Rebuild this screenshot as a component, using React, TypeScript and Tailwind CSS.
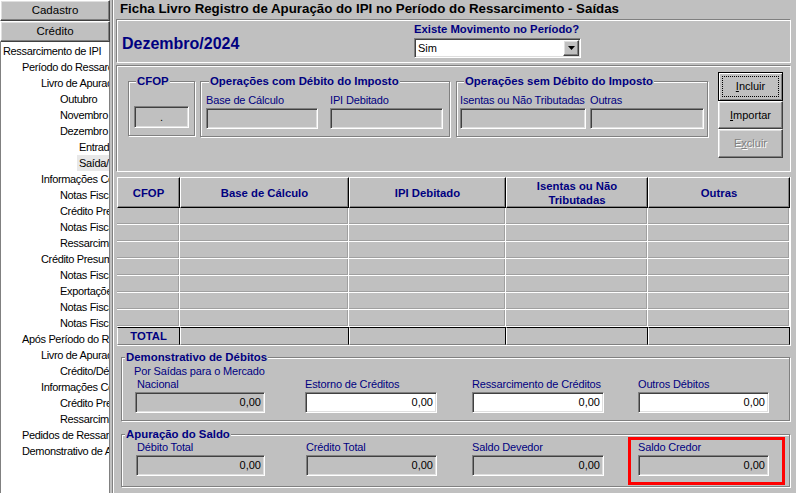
import React from "react";

type TreeItem = { label: string; level: number; selected?: boolean };

const TREE: TreeItem[] = [
  { label: "Ressarcimento de IPI", level: 0 },
  { label: "Período do Ressarcimento", level: 1 },
  { label: "Livro de Apuração", level: 2 },
  { label: "Outubro", level: 3 },
  { label: "Novembro", level: 3 },
  { label: "Dezembro", level: 3 },
  { label: "Entradas", level: 4 },
  { label: "Saída/Débito", level: 4, selected: true },
  { label: "Informações Complementares", level: 2 },
  { label: "Notas Fiscais", level: 3 },
  { label: "Crédito Presumido", level: 3 },
  { label: "Notas Fiscais", level: 3 },
  { label: "Ressarcimento", level: 3 },
  { label: "Crédito Presumido", level: 2 },
  { label: "Notas Fiscais", level: 3 },
  { label: "Exportações", level: 3 },
  { label: "Notas Fiscais", level: 3 },
  { label: "Notas Fiscais", level: 3 },
  { label: "Após Período do Ressarcimento", level: 1 },
  { label: "Livro de Apuração", level: 2 },
  { label: "Crédito/Débito", level: 3 },
  { label: "Informações Complementares", level: 2 },
  { label: "Crédito Presumido", level: 3 },
  { label: "Ressarcimento", level: 3 },
  { label: "Pedidos de Ressarcimento", level: 1 },
  { label: "Demonstrativo de Apuração", level: 1 },
];

const INDENT = ["pl-0", "pl-[19px]", "pl-[38px]", "pl-[57px]", "pl-[76px]"];

const SUNKEN =
  "border border-t-[#808080] border-l-[#808080] border-b-white border-r-white shadow-[inset_1px_1px_0_#404040,inset_-1px_-1px_0_#dfdfdf]";
const PANEL =
  "border border-t-[#808080] border-l-[#808080] border-b-white border-r-white shadow-[inset_1px_1px_0_#fff]";
const RAISED =
  "border border-t-white border-l-white border-b-[#404040] border-r-[#404040] shadow-[inset_-1px_-1px_0_#808080,inset_1px_1px_0_#dfdfdf]";
const GROUP = "border border-[#808080] shadow-[inset_1px_1px_0_#fff,1px_1px_0_#fff]";

function SideButton({ children }: { children: React.ReactNode }) {
  return (
    <div className={`h-[21px] w-full flex items-center justify-center text-[11.5px] text-black bg-[#c0c0c0] ${RAISED}`}>
      {children}
    </div>
  );
}

function Sidebar() {
  return (
    <div className="w-[110px] shrink-0 flex flex-col">
      <SideButton>Cadastro</SideButton>
      <SideButton>Crédito</SideButton>
      <div className="flex-1 bg-white border-l border-r border-[#808080] pt-[1px] text-[11px] tracking-[-0.35px] text-black overflow-hidden">
        {TREE.map((t, i) => (
          <div key={i} className={`h-[16px] leading-[16px] whitespace-nowrap overflow-hidden ${INDENT[t.level]}`}>
            <span className={`inline-block h-[16px] px-[2px] ${t.selected ? "bg-[#e8e8e8]" : ""}`}>{t.label}</span>
          </div>
        ))}
      </div>
    </div>
  );
}

function Field({ value, white, className }: { value?: string; white?: boolean; className: string }) {
  return (
    <div
      className={`${SUNKEN} ${white ? "bg-white" : "bg-[#c0c0c0]"} ${className} flex items-center justify-end pr-[3px] text-[11px] text-black`}
    >
      {value}
    </div>
  );
}

function Legend({ children, className }: { children: React.ReactNode; className: string }) {
  return (
    <legend className={`${className} px-[1px] bg-[#c0c0c0] text-[11.4px] font-bold leading-[14px] text-[#000080]`}>
      {children}
    </legend>
  );
}

function Label({ children, className = "" }: { children: React.ReactNode; className?: string }) {
  return (
    <div className={`h-[13px] leading-[13px] text-[11px] tracking-[-0.15px] text-[#000080] whitespace-nowrap ${className}`}>
      {children}
    </div>
  );
}

function TopPanel() {
  return (
    <div className={`h-[44px] flex ${PANEL}`}>
      <div className="w-[297px] pl-[5px] pt-[14px] text-[16px] leading-[19px] font-bold text-[#000080]">Dezembro/2024</div>
      <div className="flex flex-col pt-[2px]">
        <div className="h-[14px] leading-[14px] text-[11.3px] font-bold text-[#000080]">Existe Movimento no Período?</div>
        <div className={`mt-[2px] h-[20px] w-[167px] bg-white flex items-center justify-between pl-[3px] pr-[1px] ${SUNKEN}`}>
          <span className="text-[11px] text-black">Sim</span>
          <div className={`w-[16px] h-[16px] bg-[#c0c0c0] flex items-center justify-center ${RAISED}`}>
            <svg width="7" height="4" viewBox="0 0 7 4">
              <path d="M0 0h7L3.5 4z" fill="#000" />
            </svg>
          </div>
        </div>
      </div>
    </div>
  );
}

function ActionButtons() {
  return (
    <div className="ml-[10px] w-[65px] flex flex-col text-[11px]">
      <div className="h-[29px] border border-black shadow-[inset_1px_1px_0_#fff,inset_-1px_-1px_0_#808080] p-[3px] flex">
        <div className="flex-1 border border-dotted border-black flex items-center justify-center text-black">
          <span>
            <span className="underline">I</span>ncluir
          </span>
        </div>
      </div>
      <div className={`h-[28px] flex items-center justify-center text-black bg-[#c0c0c0] ${RAISED}`}>
        <span>
          <span className="underline">I</span>mportar
        </span>
      </div>
      <div className={`h-[29px] flex items-center justify-center text-[#808080] [text-shadow:1px_1px_0_#fff] ${RAISED}`}>
        <span>
          E<span className="underline">x</span>cluir
        </span>
      </div>
    </div>
  );
}

function EditPanel() {
  return (
    <div className={`mt-[2px] h-[107px] flex items-start pl-[11px] pt-[6px] ${PANEL}`}>
      <fieldset className={`mt-[2px] w-[67px] pb-[7px] ${GROUP}`}>
        <Legend className="ml-[7px]">CFOP</Legend>
        <div className={`mt-[18px] ml-[5px] w-[55px] h-[22px] bg-[#c0c0c0] flex items-center justify-center text-[11px] text-black ${SUNKEN}`}>
          .
        </div>
      </fieldset>
      <fieldset className={`mt-[2px] ml-[5px] w-[250px] pb-[7px] ${GROUP}`}>
        <Legend className="ml-[8px]">Operações com Débito do Imposto</Legend>
        <div className="flex mt-[6px] pl-[5px] gap-[12px]">
          <div className="w-[112px]">
            <Label>Base de Cálculo</Label>
            <Field className="mt-[1px] w-[112px] h-[21px]" />
          </div>
          <div className="w-[113px]">
            <Label>IPI Debitado</Label>
            <Field className="mt-[1px] w-[113px] h-[21px]" />
          </div>
        </div>
      </fieldset>
      <fieldset className={`mt-[2px] ml-[6px] w-[252px] pb-[7px] ${GROUP}`}>
        <Legend className="ml-[7px]">Operações sem Débito do Imposto</Legend>
        <div className="flex mt-[6px] pl-[3px] gap-[4px]">
          <div className="w-[126px]">
            <Label>Isentas ou Não Tributadas</Label>
            <Field className="mt-[1px] w-[126px] h-[21px]" />
          </div>
          <div className="w-[114px]">
            <Label>Outras</Label>
            <Field className="mt-[1px] w-[114px] h-[21px]" />
          </div>
        </div>
      </fieldset>
      <ActionButtons />
    </div>
  );
}

const HEAD_CELL =
  "flex items-center justify-center text-center border-t border-l border-white border-r border-b border-r-black border-b-black shadow-[inset_-1px_-1px_0_#808080] text-[11.3px] leading-[14px] font-bold text-[#000080]";
const DATA_CELL = "border-r border-b border-white shadow-[inset_-1px_-1px_0_#a0a0a0]";
const TOTAL_CELL =
  "flex items-center justify-center border-l border-l-white border-t border-t-black border-r border-r-black border-b border-b-[#808080] text-[11.3px] leading-[14px] font-bold text-[#000080]";

function Grid() {
  const rows = Array.from({ length: 7 });
  const cols = Array.from({ length: 5 });
  return (
    <div className="mt-[5px] ml-[1px] w-[674px] border-r border-b border-white">
      <div className="grid grid-cols-[63px_169px_157px_142px_142px] grid-rows-[31px_repeat(7,17px)_18px]">
        <div className={HEAD_CELL}>CFOP</div>
        <div className={HEAD_CELL}>Base de Cálculo</div>
        <div className={HEAD_CELL}>IPI Debitado</div>
        <div className={HEAD_CELL}>
          Isentas ou Não
          <br />
          Tributadas
        </div>
        <div className={HEAD_CELL}>Outras</div>
        {rows.map((_, r) => cols.map((__, c) => <div key={`${r}-${c}`} className={DATA_CELL} />))}
        <div className={TOTAL_CELL}>TOTAL</div>
        <div className={TOTAL_CELL} />
        <div className={TOTAL_CELL} />
        <div className={TOTAL_CELL} />
        <div className={TOTAL_CELL} />
      </div>
    </div>
  );
}

function Debitos() {
  return (
    <fieldset className={`mt-[4px] ml-[5px] w-[669px] pb-[7px] ${GROUP}`}>
      <Legend className="ml-[3px]">Demonstrativo de Débitos</Legend>
      <Label className="mt-[1px] pl-[12px]">Por Saídas para o Mercado</Label>
      <div className="flex">
        <div className="ml-[13px] w-[130px]">
          <Label className="pl-[2px]">Nacional</Label>
          <Field className="mt-[1px] h-[21px] w-full" value="0,00" />
        </div>
        <div className="ml-[40px] w-[132px]">
          <Label>Estorno de Créditos</Label>
          <Field className="mt-[1px] h-[21px] w-full" value="0,00" white />
        </div>
        <div className="ml-[35px] w-[132px]">
          <Label>Ressarcimento de Créditos</Label>
          <Field className="mt-[1px] h-[21px] w-full" value="0,00" white />
        </div>
        <div className="ml-[34px] w-[131px]">
          <Label>Outros Débitos</Label>
          <Field className="mt-[1px] h-[21px] w-full" value="0,00" white />
        </div>
      </div>
    </fieldset>
  );
}

function Saldo() {
  return (
    <fieldset className={`mt-[6px] ml-[5px] w-[669px] pb-[10px] ${GROUP}`}>
      <Legend className="ml-[3px]">Apuração do Saldo</Legend>
      <div className="flex">
        <div className="ml-[14px] w-[129px]">
          <Label className="pl-[1px]">Débito Total</Label>
          <Field className="mt-[1px] h-[21px] w-full" value="0,00" />
        </div>
        <div className="ml-[41px] w-[131px]">
          <Label>Crédito Total</Label>
          <Field className="mt-[1px] h-[21px] w-full" value="0,00" />
        </div>
        <div className="ml-[35px] w-[132px]">
          <Label>Saldo Devedor</Label>
          <Field className="mt-[1px] h-[21px] w-full" value="0,00" />
        </div>
        <div className="relative ml-[34px] w-[131px]">
          <Label>Saldo Credor</Label>
          <Field className="mt-[1px] h-[21px] w-full" value="0,00" />
          {/* highlight frame around the credit balance */}
          <div className="absolute -left-[10px] -right-[16px] -top-[4px] -bottom-[9px] border-[3px] border-[#ff0000] pointer-events-none" />
        </div>
      </div>
    </fieldset>
  );
}

export default function App() {
  return (
    <div className="w-[796px] h-[493px] overflow-hidden flex bg-[#c0c0c0] font-['Liberation_Sans',Arial,sans-serif] select-none">
      <Sidebar />
      <div className="flex-1 ml-[2px] border-l border-[#808080] shadow-[inset_1px_0_0_#fff] pl-[3px] pr-[5px] flex flex-col">
        <div className="h-[19px] leading-[18px] pl-[4px] text-[13.3px] font-bold text-black whitespace-nowrap">
          Ficha Livro Registro de Apuração do IPI no Período do Ressarcimento - Saídas
        </div>
        <TopPanel />
        <EditPanel />
        <Grid />
        <Debitos />
        <Saldo />
      </div>
    </div>
  );
}
